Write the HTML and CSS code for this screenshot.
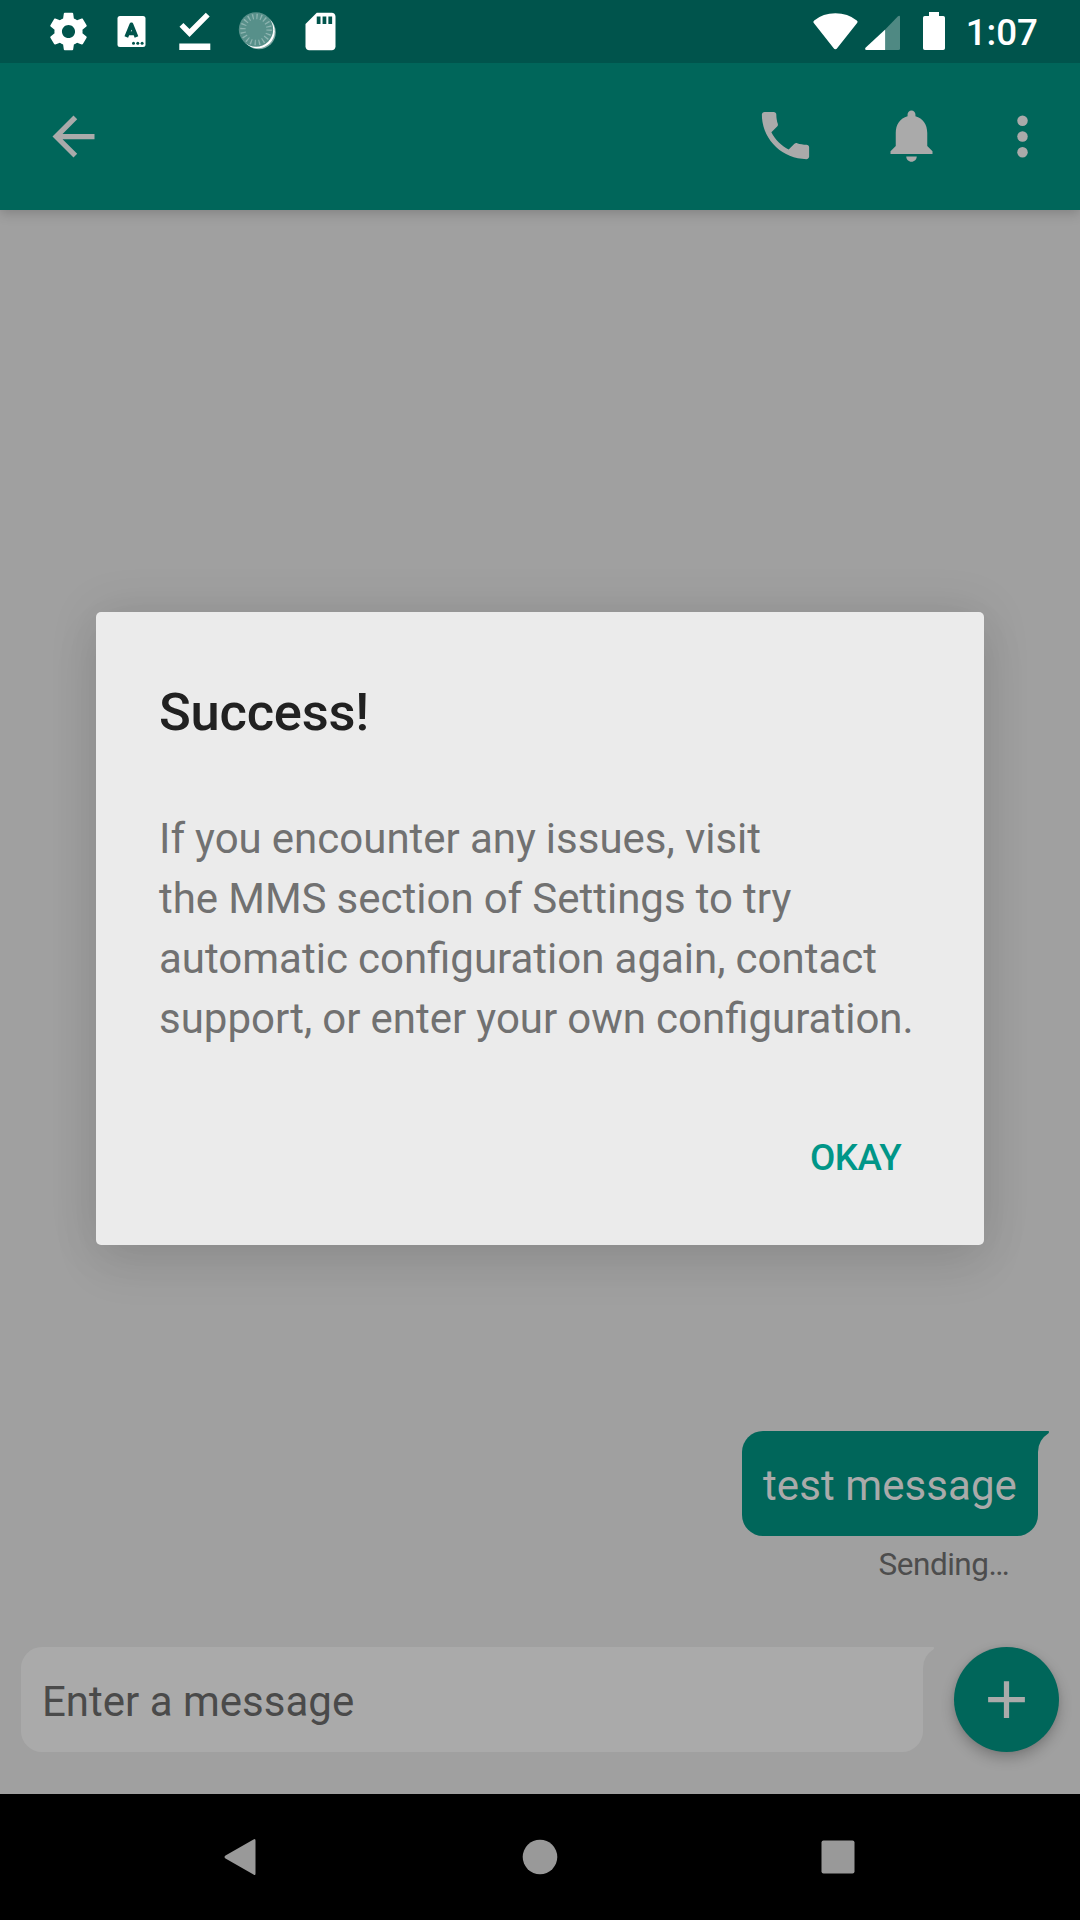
FILE: index.html
```html
<!DOCTYPE html>
<html lang="en">
<head>
<meta charset="utf-8">
<title>Messages</title>
<link rel="stylesheet" href="styles.css">
</head>
<body>
<div class="screen">
  <header class="status-bar">
    <div class="notifications">
      <svg viewBox="0 0 24 24"><path d="M19.43 12.98c.04-.32.07-.64.07-.98s-.03-.66-.07-.98l2.11-1.65c.19-.15.24-.42.12-.64l-2-3.46c-.12-.22-.39-.3-.61-.22l-2.49 1c-.52-.4-1.08-.73-1.69-.98l-.38-2.65C14.46 2.18 14.25 2 14 2h-4c-.25 0-.46.18-.49.42l-.38 2.65c-.61.25-1.17.59-1.69.98l-2.49-1c-.23-.09-.49 0-.61.22l-2 3.46c-.13.22-.07.49.12.64l2.11 1.65c-.04.32-.07.65-.07.98s.03.66.07.98l-2.11 1.65c-.19.15-.24.42-.12.64l2 3.46c.12.22.39.3.61.22l2.49-1c.52.4 1.08.73 1.69.98l.38 2.65c.03.24.24.42.49.42h4c.25 0 .46-.18.49-.42l.38-2.65c.61-.25 1.17-.59 1.69-.98l2.49 1c.23.09.49 0 .61-.22l2-3.46c.12-.22.07-.49-.12-.64l-2.11-1.65zM12 15.5c-1.93 0-3.5-1.57-3.5-3.5s1.57-3.5 3.5-3.5 3.500 1.570 3.500 3.500-1.570 3.500-3.500 3.500z"/></svg>
      <svg viewBox="0 0 45 45"><rect x="8.5" y="7" width="28" height="31" rx="2.5"/><path class="cut-line" d="M17.3 28 22.4 15.4 27.5 28M19 24.2h6.8"/><g class="cut"><circle cx="24.5" cy="34.2" r="1.5"/><circle cx="28.8" cy="34.2" r="1.5"/><circle cx="33.1" cy="34.2" r="1.5"/></g></svg>
      <svg viewBox="0 0 45 45"><path d="M7.5 17.8 11.4 14 17.5 20.1 33.8 3.8 37.7 7.6 17.5 28zM7.3 34.5h31v6.4h-31z"/></svg>
      <svg viewBox="0 0 45 45"><circle class="disc-rim" cx="23.8" cy="23.2" r="17"/><circle class="disc-edge" cx="22.7" cy="22.3" r="17"/><circle class="disc" cx="21" cy="20.5" r="17.2"/><circle class="disc-ticks" cx="21" cy="20.5" r="13.1"/></svg>
      <svg viewBox="0 0 24 24"><path d="M18 2h-8L4 8v12c0 1.1.9 2 2 2h12c1.1 0 2-.9 2-2V4c0-1.100-.9-2-2-2z"/><path class="cut" d="M10 4h2v4h-2zM13.100 4h2v4h-2zM16.200 4h2v4h-2z"/></svg>
    </div>
    <div class="system">
      <svg class="wifi" viewBox="0 0 45 37"><path d="M22.400 36.200Q21.300 36.200 20.500 35L.8 10Q-.2 8.600 1.200 7.500 10 .3 22.400 .3T43.800 7.500Q45.200 8.600 44.100 10L24.300 35Q23.500 36.200 22.400 36.200z"/></svg>
      <svg class="signal" viewBox="0 0 36 36"><path class="faint" d="M20.200 14.400 33 1.200Q35 0 35 2V33.500Q35 35 33.500 35H20.200z"/><path d="M20.200 14.400V35H1.500Q-.6 35 .5 32.700z"/></svg>
      <svg class="battery" viewBox="0 0 22 38"><path d="M6 0h10v4h4.200Q22 4 22 5.800V36.200Q22 38 20.200 38H1.800Q0 38 0 36.200V5.800Q0 4 1.800 4H6z"/></svg>
      <time class="clock">1:07</time>
    </div>
  </header>

  <div class="app-bar">
    <svg class="back" viewBox="0 0 24 24"><path d="M20 11H7.830l5.590-5.590L12 4l-8 8 8 8 1.410-1.410L7.830 13H20v-2z"/></svg>
    <svg class="call" viewBox="0 0 24 24"><path d="M6.620 10.790c1.440 2.830 3.760 5.140 6.590 6.590l2.200-2.200c.27-.27.67-.36 1.020-.24 1.120.37 2.330.57 3.570.57.55 0 1 .45 1 1V20c0 .55-.45 1-1 1-9.390 0-17-7.610-17-17 0-.55.45-1 1-1h3.500c.55 0 1 .45 1 1 0 1.250.2 2.450.57 3.570.11.35.03.74-.25 1.020l-2.200 2.200z"/></svg>
    <svg class="bell" viewBox="0 0 24 24"><path d="M12 22c1.100 0 2-.9 2-2h-4c0 1.100.9 2 2 2zm6-6v-5c0-3.070-1.640-5.640-4.500-6.320V4c0-.83-.67-1.500-1.500-1.500s-1.500.67-1.500 1.500v.68C7.630 5.360 6 7.920 6 11v5l-2 2v1h16v-1l-2-2z"/></svg>
    <svg class="more" viewBox="0 0 24 24"><circle cx="12" cy="6" r="2"/><circle cx="12" cy="12" r="2"/><circle cx="12" cy="18" r="2"/></svg>
  </div>

  <main class="conversation">
    <div class="bubble">test message<svg class="tail" viewBox="0 0 11 21"><path d="M0 0H10.500Q11.500 1 10.500 2.200Q0 9 0 21z"/></svg></div>
    <div class="status">Sending…</div>
  </main>

  <div class="composer">
    <div class="field">Enter a message<svg class="tail" viewBox="0 0 11 21"><path d="M0 0H10.500Q11.500 1 10.500 2.200Q0 9 0 21z"/></svg></div>
    <div class="fab"><svg viewBox="0 0 24 24"><path d="M19 13h-6v6h-2v-6H5v-2h6V5h2v6h6v2z"/></svg></div>
  </div>

  <nav class="nav-bar">
    <svg viewBox="0 0 44 44"><path d="M34.500 4.600Q36.500 3.200 36.500 5.600V38.400Q36.500 40.800 34.500 39.400L6.500 23.500Q4.500 22 6.500 20.500z"/></svg>
    <svg viewBox="0 0 44 44"><circle cx="22" cy="22" r="17.300"/></svg>
    <svg viewBox="0 0 44 44"><rect x="5.500" y="5.500" width="33" height="33" rx="2"/></svg>
  </nav>

  <div class="overlay">
    <section class="dialog">
      <h1>Success!</h1>
      <p>If you encounter any issues, visit<br>the MMS section of Settings to try<br>automatic configuration again, contact<br>support, or enter your own configuration.</p>
      <div class="okay">OKAY</div>
    </section>
  </div>
</div>
</body>
</html>
```

FILE: styles.css
```css
* { box-sizing: border-box; }
body {
  margin: 0;
  font-family: Roboto, sans-serif;
}
svg {
  display: block;
  flex: none;
  fill: currentColor;
}
.screen {
  position: relative;
  width: 1080px;
  height: 1920px;
  display: flex;
  flex-direction: column;
  overflow: hidden;
  background: #a0a0a0;
}

.status-bar {
  height: 63px;
  display: flex;
  justify-content: space-between;
  background: #00544c;
  color: #fff;
}
.notifications {
  display: flex;
  gap: 18px;
  padding: 9px 0 0 46px;
}
.notifications svg { width: 45px; height: 45px; }
.cut { fill: #00544c; }
.cut-line { fill: none; stroke: #00544c; stroke-width: 3.9; stroke-linejoin: round; }
.disc-rim { fill: #7fa9a5; }
.disc-edge { fill: #fff; }
.disc { fill: #57908a; }
.disc-ticks { fill: none; stroke: #8db4b0; stroke-width: 5.5; stroke-dasharray: 1.3 2.815; }
.system {
  display: flex;
  padding-right: 42px;
}
.wifi { width: 45px; height: 37px; margin: 13px 7px 0 0; }
.signal { width: 36px; height: 36px; margin: 15px 22px 0 0; }
.faint { opacity: .31; }
.battery { width: 22px; height: 38px; margin: 12px 21px 0 0; }
.clock {
  font-size: 36.75px;
  font-weight: 500;
  line-height: 43px;
  padding-top: 11px;
}

.app-bar {
  position: relative;
  height: 147px;
  display: flex;
  align-items: center;
  padding: 0 26px 0 42px;
  background: #00665a;
  color: #aaa;
  box-shadow: 0 3px 12px rgba(0, 0, 0, .2);
  clip-path: inset(0 0 -30px);
}
.app-bar svg { width: 63px; height: 63px; }
.call { margin: 0 63px 2px auto; }
.bell { margin: 0 48px 2px 0; }

.conversation {
  flex: 1;
  display: flex;
  flex-direction: column;
  justify-content: flex-end;
  align-items: flex-end;
  padding: 0 42px 63px 0;
}
.bubble, .field {
  position: relative;
  height: 105px;
  border-radius: 21px 0 21px 21px;
  font-size: 42px;
  line-height: 110px;
  white-space: nowrap;
}
.bubble {
  width: 296px;
  padding-left: 21px;
  background: #00665a;
  color: #aaa;
  letter-spacing: .08px;
}
.tail {
  position: absolute;
  left: 100%;
  top: 0;
  width: 11px;
  height: 21px;
}
.bubble .tail { fill: #00665a; }
.status {
  margin: 9px 29px 0 0;
  font-size: 31.5px;
  line-height: 39px;
  letter-spacing: -.5px;
  color: #4d4d4d;
}

.composer {
  display: flex;
  justify-content: space-between;
  padding: 0 21px 42px;
}
.field {
  width: 902px;
  padding-left: 21px;
  background: #aaa;
  color: #4a4a4a;
}
.field .tail { fill: #aaa; }
.fab {
  width: 105px;
  height: 105px;
  display: grid;
  place-items: center;
  border-radius: 50%;
  background: #00665a;
  color: #aaa;
  box-shadow: 0 6px 14px rgba(0, 0, 0, .24), 0 0 5px rgba(0, 0, 0, .06);
}
.fab svg { width: 63px; height: 63px; }

.nav-bar {
  height: 126px;
  display: flex;
  justify-content: center;
  align-items: center;
  gap: 254.5px;
  padding-right: 1px;
  background: #000;
  color: #999;
}
.nav-bar svg { width: 44px; height: 44px; }

.overlay {
  position: absolute;
  inset: 63px 0 126px;
  display: grid;
  place-items: center;
}
.dialog {
  width: 888px;
  height: 633px;
  display: flex;
  flex-direction: column;
  padding: 69px 63px 0;
  border-radius: 5px;
  background: #ebebeb;
  box-shadow: 0 22px 50px rgba(0, 0, 0, .07), 0 0 50px rgba(0, 0, 0, .1);
}
h1 {
  margin: 0;
  font-size: 52.5px;
  font-weight: 500;
  line-height: 62px;
  letter-spacing: -.25px;
  color: #212121;
}
p {
  margin: 66px 0 0;
  font-size: 42px;
  line-height: 60px;
  word-spacing: -.35px;
  white-space: nowrap;
  color: #717171;
}
.okay {
  margin: 87px 20px 0 0;
  align-self: flex-end;
  font-size: 36.75px;
  font-weight: 500;
  line-height: 43px;
  letter-spacing: -.6px;
  color: #009688;
}
```
